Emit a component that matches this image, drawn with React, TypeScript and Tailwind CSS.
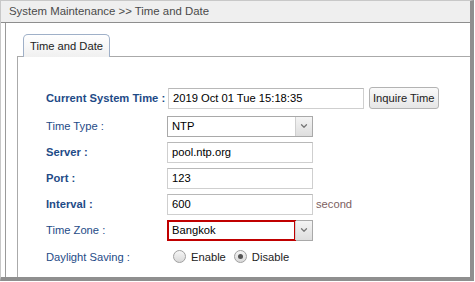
import { ChevronDown } from 'lucide-react';

const font = { fontFamily: '"Liberation Sans", Arial, sans-serif' };

function Label({ text, bold }: { text: string; bold?: boolean }) {
  return (
    <div className={`w-[121px] shrink-0 whitespace-nowrap text-[11.2px] text-[#1e4b87] ${bold ? 'font-bold' : ''}`}>
      {text}
    </div>
  );
}

function TextBox({ value, w = 'w-[146px]' }: { value: string; w?: string }) {
  return (
    <div className={`${w} h-[21px] border border-[#cfcfcf] border-t-[#b8b8b8] bg-white flex items-center pl-[4px] text-[11.2px] text-black`}>
      {value}
    </div>
  );
}

function Select({ value, highlight }: { value: string; highlight?: boolean }) {
  return (
    <div className="w-[146px] h-[21px] border border-[#a9a9a9] bg-white flex">
      <div
        className={`flex-1 flex items-center text-[11.2px] text-black ${
          highlight ? 'border-2 border-[#c00000] -m-px pl-[3px]' : 'pl-[4px]'
        }`}
      >
        {value}
      </div>
      <div className="w-[17px] border-l border-[#cfcfcf] bg-gradient-to-b from-[#f4f4f4] to-[#dedede] flex items-center justify-center">
        <ChevronDown className="w-[10px] h-[10px] text-[#777]" strokeWidth={3} />
      </div>
    </div>
  );
}

function Radio({ checked, label }: { checked?: boolean; label: string }) {
  return (
    <div className="flex items-center gap-[5px]">
      <span className="w-[13px] h-[13px] rounded-full border border-[#a0a0a0] bg-gradient-to-b from-[#f6f6f6] to-[#d9d9d9] flex items-center justify-center">
        {checked && <span className="w-[5px] h-[5px] rounded-full bg-[#555]" />}
      </span>
      <span className="text-[11.2px] text-[#222]">{label}</span>
    </div>
  );
}

export default function App() {
  return (
    <div className="w-[475px] h-[282px] bg-white" style={font}>
      <div className="w-[474px] h-[281px] flex flex-col border-l border-t border-[#c8c8c8] border-r-[4px] border-b-[4px] border-r-[#8f8f8f] border-b-[#8f8f8f]">
        <div className="h-[22px] shrink-0 bg-[#efefef] border-b border-[#8e8e8e] flex items-center pl-[8px] text-[11.4px] text-[#4a4a4a]">
          System Maintenance &gt;&gt; Time and Date
        </div>
        <div className="flex-1 ml-[4px] border-l border-[#9a9a9a] pl-[11px] pt-[10px] flex flex-col">
          <div className="flex pl-[6px]">
            <div className="h-[23px] px-[6px] flex items-center rounded-t-[5px] border border-b-0 border-[#9fb0c8] bg-gradient-to-b from-white to-[#f0f0f0] text-[11.2px] text-[#222] relative top-px">
              Time and Date
            </div>
          </div>
          <div className="flex-1 border-t border-l border-[#aaaaaa] pt-[28px] pl-[28px] flex flex-col">
            <div className="h-[26px] flex items-center">
              <Label text="Current System Time :" bold />
              <div className="ml-[1px]">
                <TextBox value="2019 Oct 01 Tue 15:18:35" w="w-[196px]" />
              </div>
              <div className="ml-[5px] h-[22px] px-[3px] flex items-center rounded-[3px] border border-[#b3b3b3] bg-gradient-to-b from-[#fafafa] to-[#e6e6e6] text-[11.2px] text-[#222]">
                Inquire Time
              </div>
            </div>
            <div className="h-[26px] mt-[2px] flex items-center">
              <Label text="Time Type :" />
              <Select value="NTP" />
            </div>
            <div className="h-[26px] flex items-center">
              <Label text="Server :" bold />
              <TextBox value="pool.ntp.org" />
            </div>
            <div className="h-[26px] flex items-center">
              <Label text="Port :" bold />
              <TextBox value="123" />
            </div>
            <div className="h-[26px] flex items-center">
              <Label text="Interval :" bold />
              <TextBox value="600" />
              <span className="ml-[3px] text-[11.2px] text-[#7d5f5f]">second</span>
            </div>
            <div className="h-[26px] flex items-center">
              <Label text="Time Zone :" />
              <Select value="Bangkok" highlight />
            </div>
            <div className="h-[26px] mt-[1px] flex items-center">
              <Label text="Daylight Saving :" />
              <div className="flex items-center gap-[8px] pl-[6px]">
                <Radio label="Enable" />
                <Radio label="Disable" checked />
              </div>
            </div>
          </div>
        </div>
      </div>
    </div>
  );
}
